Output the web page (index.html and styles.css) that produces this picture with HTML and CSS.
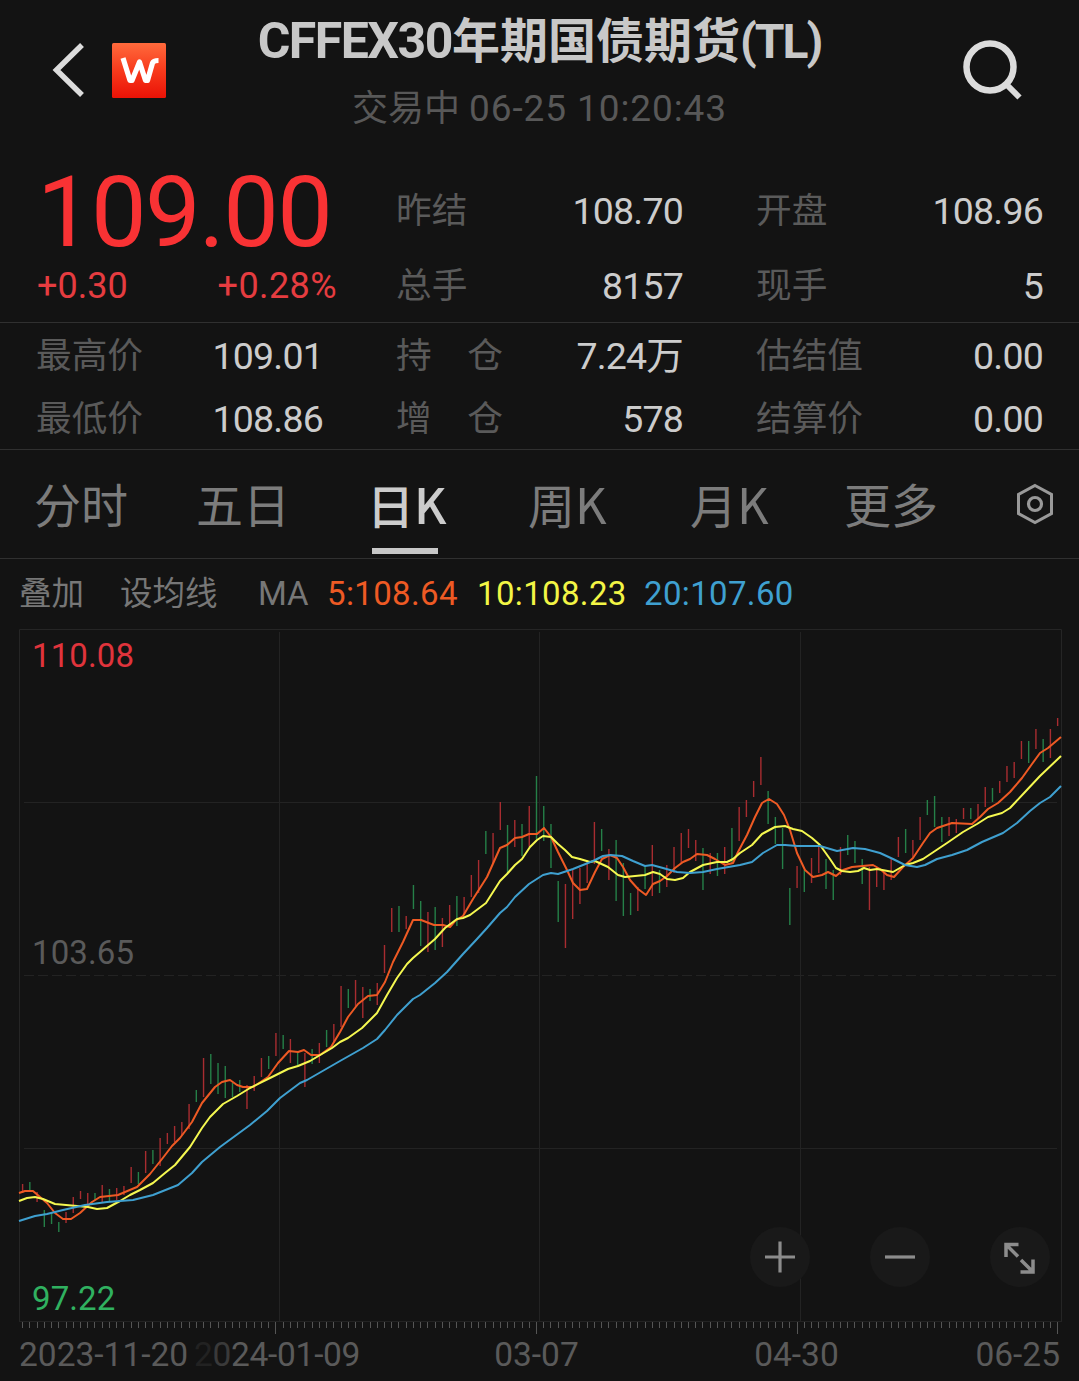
FILE: index.html
```html
<!DOCTYPE html>
<html lang="zh-CN">
<head>
    <meta charset="UTF-8">
    <meta name="viewport" content="width=device-width, initial-scale=1.0">
    <title>CFFEX30年期国债期货(TL)</title>
    <link rel="stylesheet" href="styles.css">
</head>
<body>
    <!-- Header -->
    <header class="header">
        <div class="header-left">
            <svg class="back-icon" width="34" height="56" viewBox="0 0 34 56">
                <path d="M30 3 L4.500 28 L30 53" fill="none" stroke="#dcdcdc" stroke-width="5.500"/>
            </svg>
            <svg class="logo" width="54" height="55" viewBox="0 0 54 55">
                <defs>
                    <linearGradient id="logoFill" x1="0" y1="0" x2="0" y2="1">
                        <stop offset="0" stop-color="#ff6a3c"/>
                        <stop offset="0.5" stop-color="#f83a1c"/>
                        <stop offset="1" stop-color="#ea1206"/>
                    </linearGradient>
                </defs>
                <rect width="54" height="55" rx="1.500" fill="url(#logoFill)"/>
                <path d="M11 15 L18 37.500 H20 L27.500 19 L33.500 37.500 H35.500 L40.500 20 Q41.500 17.500 46.500 17.500" fill="none" stroke="#fff" stroke-width="5.200" stroke-linejoin="round"/>
            </svg>
        </div>
        <div class="header-title">
            <h1><span class="title-code">CFFEX30</span>年期国债期货<span class="title-symbol">(TL)</span></h1>
            <p>交易中 <span>06-25 10:20:43</span></p>
        </div>
        <svg class="search-icon" width="64" height="64" viewBox="0 0 64 64">
            <circle cx="30" cy="29" r="23.500" fill="none" stroke="#dcdcdc" stroke-width="6.500"/>
            <path d="M46 46 L59.500 59.500" fill="none" stroke="#dcdcdc" stroke-width="6"/>
        </svg>
    </header>

    <!-- Quote -->
    <section class="quote">
        <div class="price-block">
            <div class="price">109.00</div>
            <div class="change"><span>+0.30</span><span class="percent">+0.28%</span></div>
        </div>
        <div class="stat"><span class="label">昨结</span><span class="value">108.70</span></div>
        <div class="stat"><span class="label">开盘</span><span class="value">108.96</span></div>
        <div class="stat"><span class="label">总手</span><span class="value">8157</span></div>
        <div class="stat"><span class="label">现手</span><span class="value">5</span></div>
    </section>

    <section class="details">
        <div class="stat"><span class="label">最高价</span><span class="value">109.01</span></div>
        <div class="stat"><span class="label spread"><i>持</i><i>仓</i></span><span class="value">7.24万</span></div>
        <div class="stat"><span class="label">估结值</span><span class="value">0.00</span></div>
        <div class="stat"><span class="label">最低价</span><span class="value">108.86</span></div>
        <div class="stat"><span class="label spread"><i>增</i><i>仓</i></span><span class="value">578</span></div>
        <div class="stat"><span class="label">结算价</span><span class="value">0.00</span></div>
    </section>

    <!-- Period tabs -->
    <nav class="tabs">
        <a>分时</a>
        <a>五日</a>
        <a class="active">日<span>K</span></a>
        <a>周<span>K</span></a>
        <a>月<span>K</span></a>
        <a>更多</a>
        <svg class="settings-icon" width="40" height="42" viewBox="0 0 40 42">
            <path d="M20 2.500 L36.500 11.500 V30.500 L20 39.500 L3.500 30.500 V11.500 Z" fill="none" stroke="#999" stroke-width="3"/>
            <circle cx="20" cy="21" r="6.500" fill="none" stroke="#999" stroke-width="3.200"/>
        </svg>
    </nav>

    <!-- Moving averages -->
    <div class="averages">
        <span class="overlay">叠加</span>
        <span class="set-ma">设均线</span>
        <span class="ma">MA</span>
        <span class="ma5">5:108.64</span>
        <span class="ma10">10:108.23</span>
        <span class="ma20">20:107.60</span>
    </div>

    <!-- Chart -->
    <div class="chart">
        <svg id="chart" width="1079" height="710" viewBox="0 628 1079 710"></svg>
        <span class="scale scale-high">110.08</span>
        <span class="scale scale-mid">103.65</span>
        <span class="scale scale-low">97.22</span>
        <div class="chart-buttons">
            <button type="button">
                <svg width="60" height="60" viewBox="0 0 60 60"><path d="M15 30 H45 M30 14.500 V45.500" fill="none" stroke="#8c8c8c" stroke-width="3.200"/></svg>
            </button>
            <button type="button">
                <svg width="60" height="60" viewBox="0 0 60 60"><path d="M15 30 H45" fill="none" stroke="#8c8c8c" stroke-width="3.200"/></svg>
            </button>
            <button type="button">
                <svg width="60" height="60" viewBox="0 0 60 60"><path d="M16 30 V17.500 H28.500 M16 17.500 L28 29.500 M43 32.500 V45 H30.500 M43 45 L31 33" fill="none" stroke="#8c8c8c" stroke-width="3.500"/></svg>
            </button>
        </div>
    </div>

    <div class="dates">
        <span>2023-11-20</span>
        <span class="second"><i class="fade-1">2</i><i class="fade-2">0</i>24-01-09</span>
        <span class="center">03-07</span>
        <span class="center">04-30</span>
        <span class="right">06-25</span>
    </div>

    <script src="chart.js"></script>
</body>
</html>
```
FILE: styles.css
```css
* {
    box-sizing: border-box;
}
body {
    margin: 0;
    width: 1079px;
    height: 1381px;
    overflow: hidden;
    background: #131313;
    color: #ccc;
    font-family: Roboto, "Noto Sans CJK SC", sans-serif;
}
i {
    font-style: normal;
}

/* Header */
.header {
    display: grid;
    grid-template-columns: 200px 1fr 200px;
    height: 160px;
}
.header-left {
    display: flex;
    align-items: center;
    gap: 26px;
    height: 56px;
    margin-top: 42px;
    padding-left: 52px;
}
.header-title {
    text-align: center;
    white-space: nowrap;
}
.header-title h1 {
    margin: 0;
    padding-top: 11px;
    height: 79px;
    font-size: 48px;
    font-weight: 700;
    line-height: 60px;
    color: #c8c8c8;
}
.title-code {
    font-size: 50px;
    letter-spacing: -1.5px;
}
.title-symbol {
    letter-spacing: -2px;
}
.header-title p {
    margin: 0;
    font-size: 36px;
    line-height: 60px;
    color: #585858;
}
.header-title p span {
    font-size: 37px;
    letter-spacing: 0.9px;
}
.search-icon {
    margin: 38px 0 0 81px;
}

/* Quote */
.quote, .details {
    display: grid;
    grid-template-columns: repeat(3, 286px);
    column-gap: 74px;
    padding-left: 37px;
    border-bottom: 1px solid #303030;
}
.quote {
    height: 163px;
    padding-top: 13px;
    grid-template-rows: 75px 75px;
}
.details {
    height: 127px;
    padding-top: 1px;
    grid-template-rows: 63px 63px;
}
.price-block {
    grid-row: span 2;
    color: #f93234;
}
.price {
    height: 79px;
    font-size: 99px;
    line-height: 79px;
    letter-spacing: -1.7px;
}
.change {
    display: flex;
    justify-content: space-between;
    margin-right: -14px;
    font-size: 36px;
    line-height: 68px;
    color: #e63c40;
}
.percent {
    letter-spacing: 0.4px;
}
.stat {
    display: flex;
    justify-content: space-between;
    align-items: center;
}
.label {
    margin-left: -1px;
    padding-top: 1px;
    font-size: 35.7px;
    line-height: 60px;
    color: #5a5a5a;
}
.spread {
    display: flex;
    justify-content: space-between;
    width: 107px;
}
.value {
    font-size: 37.5px;
    line-height: 60px;
    letter-spacing: -0.8px;
}

/* Period tabs */
.tabs {
    display: grid;
    grid-template-columns: 162px 171px 161px 162px 154px 171px 40px;
    height: 109px;
    padding-left: 34px;
    border-bottom: 1px solid #303030;
    font-family: "Noto Sans CJK SC", sans-serif;
    font-size: 47px;
    line-height: 105px;
    color: #7c7c7c;
}
.tabs span {
    font-size: 49px;
}
.tabs .active {
    position: relative;
    color: #ccc;
    font-weight: 500;
}
.tabs .active::after {
    content: "";
    position: absolute;
    left: 5px;
    bottom: 4px;
    width: 66px;
    height: 6px;
    background: #c8c8c8;
}
.settings-icon {
    margin-top: 33px;
}

/* Moving averages */
.averages {
    display: flex;
    height: 69px;
    padding-left: 19px;
    font-size: 33px;
    line-height: 69px;
    color: #777;
}
.overlay, .set-ma {
    padding-top: 1px;
    font-size: 32.5px;
}
.overlay {
    width: 101px;
}
.set-ma {
    width: 138px;
}
.ma {
    width: 69px;
}
.ma5, .ma10, .ma20 {
    letter-spacing: 0.35px;
}
.ma5 {
    width: 150px;
    color: #ee5a24;
}
.ma10 {
    width: 167px;
    color: #f2f545;
}
.ma20 {
    color: #3fa0d0;
}

/* Chart */
.chart {
    position: relative;
    height: 710px;
}
.chart svg {
    display: block;
}
.scale {
    position: absolute;
    left: 32px;
    font-size: 33px;
    line-height: 40px;
    letter-spacing: 0.1px;
}
.scale-high {
    top: 8px;
    color: #e0343c;
}
.scale-mid {
    top: 305px;
    color: #5a5a5a;
}
.scale-low {
    top: 651px;
    color: #30b160;
}
.chart-buttons {
    position: absolute;
    top: 599px;
    right: 29px;
    display: flex;
    gap: 60px;
}
.chart-buttons button {
    width: 60px;
    height: 60px;
    padding: 0;
    border: none;
    border-radius: 50%;
    background: #191919;
}
.frame {
    fill: none;
    stroke: #252525;
}
.grid-line {
    stroke: #232323;
}
.dashed {
    stroke-dasharray: 10 4;
}
.tick {
    stroke: #555;
}
.up {
    stroke: #a82c30;
    stroke-width: 1.4;
}
.down {
    stroke: #258048;
    stroke-width: 1.4;
}
.line {
    fill: none;
    stroke-width: 2;
    stroke-linejoin: round;
}
.line5 {
    stroke: #ee5a24;
}
.line10 {
    stroke: #f5f850;
}
.line20 {
    stroke: #3fa0d0;
}

/* Dates */
.dates {
    display: grid;
    grid-template-columns: 175px 169px 347px 173px 177px;
    padding-left: 19px;
    font-size: 33.5px;
    line-height: 34px;
    color: #5a5a5a;
    white-space: nowrap;
}
.second {
    letter-spacing: -0.3px;
}
.center {
    text-align: center;
}
.right {
    text-align: right;
}
.fade-1 {
    color: #222;
}
.fade-2 {
    color: #3a3a3a;
}
```
FILE: chart.js
```js
const svg = document.getElementById("chart");

// One entry per trading day: high, low, colour (r = up, g = down)
const bars = `1184 1193 r,1182 1190 g,1192 1202 r,1210 1227 g,1212 1224 g,1222 1232 g,1212 1223 r,1197 1213 r,1191 1199 r,1193 1204 r,
1193 1200 g,1185 1202 r,1189 1201 g,1188 1200 r,1186 1195 r,1167 1183 r,1172 1184 g,1151 1173 r,1150 1164 g,1138 1166 r,
1133 1144 r,1126 1142 r,1122 1135 r,1104 1129 r,1090 1102 g,1058 1097 r,1054 1084 g,1063 1094 g,1066 1098 g,1083 1097 g,
1080 1092 g,1085 1109 r,1076 1091 r,1058 1077 r,1056 1069 g,1033 1056 r,1035 1049 g,1039 1063 r,1052 1066 g,1053 1087 r,
1049 1064 g,1043 1063 r,1030 1047 g,1024 1043 r,986 1027 r,989 1008 g,980 1007 r,987 1018 r,989 1001 g,983 1005 r,
945 973 r,908 932 r,906 932 g,916 929 r,885 909 g,901 946 g,912 952 r,907 950 g,918 947 r,905 927 r,
896 926 g,897 914 r,875 897 r,860 893 r,831 854 g,833 863 r,802 830 r,825 873 g,820 847 r,824 856 g,
806 847 r,776 839 g,806 841 g,824 868 g,881 922 g,884 948 r,870 919 r,868 904 r,860 883 r,822 864 r,
829 851 g,849 880 r,840 901 g,863 916 g,893 915 g,887 911 r,865 889 g,845 896 r,870 893 g,865 887 r,
847 873 r,833 863 r,829 848 r,840 861 r,848 890 g,853 874 r,853 876 g,847 874 r,828 863 g,807 841 r,
800 817 r,781 797 r,757 785 r,791 824 g,817 844 g,828 869 g,888 925 g,866 888 r,870 892 g,858 883 r,
846 873 r,859 889 g,870 900 g,847 875 r,835 855 g,841 863 g,859 884 g,867 910 r,867 887 r,872 890 r,
858 880 r,837 857 r,829 853 g,840 857 r,817 840 r,800 815 g,796 827 g,817 842 g,817 836 r,819 833 r,
808 819 r,808 819 g,804 818 r,787 807 r,788 802 g,781 793 r,766 782 r,762 778 r,741 759 r,741 763 g,
729 749 r,739 762 g,729 758 r,718 726 r`.split(",").map(bar => bar.trim().split(" "));

const ma5 = "19,1193 25,1191 33,1191 40,1197 47,1203 55,1213 63,1219 71,1219 80,1213 92,1202 100,1197 118,1195 125,1192 137,1187 150,1174 162,1159 172,1146 180,1138 192,1122 202,1103 215,1087 222,1082 230,1080 237,1085 243,1087 253,1087 268,1077 278,1063 289,1051 298,1052 304,1050 311,1055 320,1055 331,1047 340,1032 348,1017 358,1004 368,996 377,995 385,982 393,962 403,942 413,920 421,920 434,925 443,925 450,927 455,921 463,916 473,899 487,877 500,848 507,845 515,838 522,837 529,834 537,834 544,828 551,837 558,852 567,870 573,883 580,890 587,889 595,872 602,859 610,855 617,858 623,867 630,880 638,889 646,895 653,884 660,881 667,876 675,868 683,862 690,859 697,854 707,855 715,859 725,865 733,863 738,852 747,835 755,817 762,803 769,799 777,804 784,815 790,830 797,853 805,870 813,877 822,875 828,872 836,876 843,870 852,867 873,865 880,869 887,875 894,877 903,867 913,858 923,843 930,833 937,828 952,823 972,824 980,817 988,809 998,803 1010,792 1022,778 1032,764 1040,753 1048,748 1061,737";
const ma10 = "19,1201 27,1198 35,1197 43,1199 55,1204 77,1206 88,1207 97,1209 107,1208 120,1201 130,1195 140,1190 153,1183 165,1173 175,1165 190,1147 202,1128 210,1117 223,1104 237,1096 250,1088 270,1078 288,1069 298,1066 310,1061 332,1048 340,1042 348,1038 362,1028 377,1013 387,995 397,978 407,964 413,958 420,952 435,939 445,928 457,919 463,918 470,915 486,903 500,881 507,874 515,865 522,859 530,847 537,840 543,836 551,837 558,844 565,850 572,857 580,859 590,862 595,861 608,867 618,875 625,877 645,875 653,872 660,874 667,879 675,880 683,878 690,872 703,865 717,862 727,862 733,859 740,853 752,845 762,834 775,827 785,826 793,829 802,831 812,838 820,845 825,852 830,859 836,868 842,871 850,872 858,871 864,868 870,870 877,869 893,872 905,865 913,863 923,859 935,851 947,843 963,832 977,824 988,817 1002,813 1010,808 1025,792 1040,776 1061,756";
const ma20 = "19,1221 35,1216 47,1214 63,1210 85,1205 107,1202 133,1200 153,1195 178,1185 192,1173 202,1162 220,1147 250,1125 267,1111 280,1098 300,1083 307,1080 340,1061 363,1048 377,1039 385,1030 397,1015 413,999 420,995 435,983 447,972 463,954 477,939 487,928 500,913 507,907 515,897 529,884 543,875 551,873 558,874 573,869 593,861 603,856 610,855 622,856 633,861 645,866 652,865 663,868 677,872 690,873 703,872 717,869 740,865 752,862 763,853 777,845 785,845 797,846 820,846 837,851 853,848 865,849 880,853 893,859 905,865 917,867 925,865 937,859 952,855 967,850 982,842 1003,833 1017,823 1030,811 1040,803 1050,797 1061,786";

function line(x1, y1, x2, y2, cls) {
    return `<line x1="${x1}" y1="${y1}" x2="${x2}" y2="${y2}" class="${cls}"/>`;
}

// Frame and grid
let html = `<path d="M19.5 1322 V629.5 H1061.5 V1322" class="frame"/>`;
[279.5, 539.5, 800.5].forEach(x => html += line(x, 632, x, 1322, "grid-line"));
html += line(24, 802.5, 1057, 802.5, "grid-line");
html += line(24, 975.5, 1057, 975.5, "grid-line dashed");
html += line(24, 1148.5, 1057, 1148.5, "grid-line");
html += line(19, 1321.5, 1062, 1321.5, "grid-line");

// Bars and axis ticks
bars.forEach(([high, low, color], i) => {
    const x = 22.6 + i * 7.238;
    html += line(x, high, x, low, color === "r" ? "up" : "down");
    const tickX = Math.floor(x) + 0.5;
    const major = [35, 71, 107, 143].includes(i);
    html += line(tickX, 1322, tickX, major ? 1334 : 1328, "tick");
});

html += `<polyline points="${ma5}" class="line line5"/>`;
html += `<polyline points="${ma10}" class="line line10"/>`;
html += `<polyline points="${ma20}" class="line line20"/>`;
svg.innerHTML = html;
```
